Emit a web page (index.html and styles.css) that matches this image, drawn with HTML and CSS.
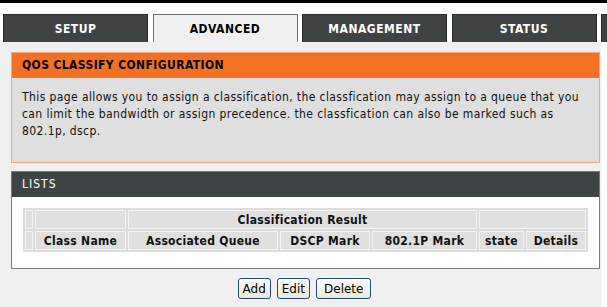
FILE: index.html
```html
<!DOCTYPE html>
<html>
  <head>
    <title>QoS Classify</title>
    <meta charset="utf-8">
    <link rel="stylesheet" href="styles.css">
  </head>
  <body>
    <div class="topbar"></div>
    <ul class="tabs">
      <li><a href="#">SETUP</a></li>
      <li><a href="#" class="current">ADVANCED</a></li>
      <li><a href="#">MANAGEMENT</a></li>
      <li><a href="#">STATUS</a></li>
      <li><a href="#"></a></li>
    </ul>
    <div class="content">
      <div class="box box-orange">
        <div class="box-head">QOS CLASSIFY CONFIGURATION</div>
        <div class="box-body">
          This page allows you to assign a classification, the classfication may assign to a queue that you<br>
          can limit the bandwidth or assign precedence. the classfication can also be marked such as<br>
          802.1p, dscp.
        </div>
      </div>
      <div class="box box-dark">
        <div class="box-head">LISTS</div>
        <div class="box-body">
          <table class="list">
            <tr>
              <th class="pad"></th>
              <th></th>
              <th colspan="4">Classification Result</th>
              <th colspan="2"></th>
            </tr>
            <tr>
              <th class="pad"></th>
              <th class="c-name">Class Name</th>
              <th class="c-queue">Associated Queue</th>
              <th class="c-dscp">DSCP Mark</th>
              <th class="c-8021p" colspan="2">802.1P Mark</th>
              <th class="c-state">state</th>
              <th class="c-details">Details</th>
            </tr>
          </table>
        </div>
      </div>
      <div class="buttons">
        <button type="button">Add</button>
        <button type="button">Edit</button>
        <button type="button" class="wide">Delete</button>
      </div>
    </div>
  </body>
</html>
```

FILE: styles.css
```css
body {
  margin: 0;
  background: #fff;
  font-family: "DejaVu Sans", "Liberation Sans", sans-serif;
  font-stretch: condensed;
  font-size: 12px;
  color: #000;
}

.topbar {
  height: 3px;
  background: #000;
}

ul.tabs {
  display: flex;
  gap: 4.5px;
  list-style: none;
  margin: 11px 0 0;
  padding: 0 0 0 3px;
  height: 28px;
  overflow: hidden;
}

ul.tabs li {
  flex: 0 0 145px;
}

ul.tabs a {
  display: block;
  height: 28px;
  line-height: 29px;
  box-sizing: border-box;
  text-align: center;
  text-decoration: none;
  font-weight: bold;
  font-size: 12px;
  letter-spacing: 0.5px;
  color: #fff;
  background: #404343;
  border: 1px solid #2a2c2c;
  border-bottom: none;
}

ul.tabs a.current {
  color: #000;
  background: #f0f0f0;
  border-color: #6b6b6b;
}

.content {
  width: 601px;
  height: 265px;
  background: #f0f0f0;
  padding-top: 10px;
  box-sizing: border-box;
}

.box {
  width: 589px;
  margin-left: 11px;
  box-sizing: border-box;
}

.box-head {
  height: 25px;
  line-height: 25px;
  padding-left: 10px;
  font-weight: bold;
  letter-spacing: 0.4px;
}

.box-orange {
  border: 1px solid #f4a77a;
}

.box-orange .box-head {
  background: #f47023;
  color: #000;
}

.box-orange .box-body {
  background: #dfdfdf;
  height: 84px;
  box-sizing: border-box;
  padding: 11px 10px 0;
  line-height: 17px;
  letter-spacing: 0.4px;
  color: #111;
}

.box-dark {
  margin-top: 8px;
  border: 1px solid #7a7a7a;
}

.box-dark .box-head {
  background: #404343;
  color: #fff;
  font-weight: normal;
  letter-spacing: 1px;
}

.box-dark .box-body {
  background: #fff;
  height: 71px;
  box-sizing: border-box;
  padding: 11px 0 0 11px;
}

table.list {
  border-collapse: separate;
  border-spacing: 2px;
  background: #dcdcdc;
  width: 565px;
}

table.list th {
  height: 17px;
  padding: 0;
  background: #e0e0e0;
  border: 1px solid #f4f4f4;
  font-weight: bold;
  letter-spacing: 0.3px;
  color: #111;
}

table.list th.pad { width: 6px; }
table.list th.c-name { width: 89px; }
table.list th.c-queue { width: 148px; }
table.list th.c-dscp { width: 88px; }
table.list th.c-state { width: 43px; }

.buttons {
  display: flex;
  justify-content: center;
  gap: 6px;
  margin-top: 9px;
  padding-left: 8px;
}

.buttons button {
  height: 21px;
  padding: 0 4px;
  font-family: "DejaVu Sans", sans-serif;
  font-stretch: normal;
  font-size: 12px;
  color: #000;
  background: linear-gradient(#fdfdfb, #ece9d8);
  border: 1px solid #1f4a7a;
  border-radius: 3px;
}

.buttons button.wide {
  padding: 0 7px;
}
```
